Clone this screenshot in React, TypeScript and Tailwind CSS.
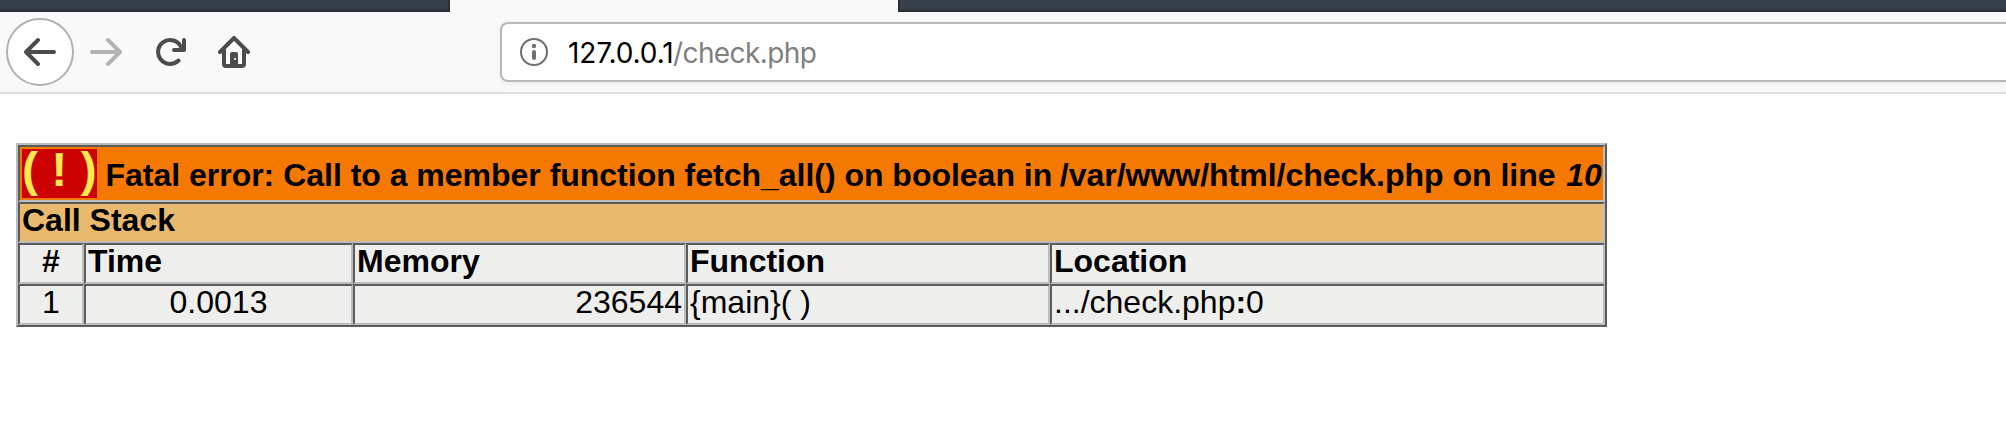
import type { ReactNode } from "react";

const cellBorder =
  "box-border border-2 border-t-[#5b5b5b] border-l-[#5b5b5b] border-b-[#bcbcbc] border-r-[#bcbcbc] px-[2px] whitespace-pre";

function Cell({ className, children }: { className: string; children: ReactNode }) {
  return <div className={`${cellBorder} ${className}`}>{children}</div>;
}

function Toolbar() {
  return (
    <header>
      <div className="flex h-3 justify-between bg-[#f9f9f9]">
        <div className="h-3 w-[450px] border-r-2 border-b-2 border-[#272e36] bg-[#343e48]" />
        <div className="h-3 w-[1108px] border-b-2 border-l-2 border-[#272e36] bg-[#373f4a]" />
      </div>
      <div className="flex h-[82px] border-b-2 border-[#dfdfdf] bg-[#f9f9f9]">
        <div className="flex h-20 w-[500px] items-center pl-1.5">
          <div className="flex size-[68px] items-center justify-center rounded-full border-2 border-[#b1b1b1] bg-white">
            <svg width="32" height="32" viewBox="0 0 32 32" fill="none" stroke="#4c4c4c" strokeWidth="4" strokeLinecap="round" strokeLinejoin="round">
              <path d="M30 16H3M14 4L2 16l12 12" />
            </svg>
          </div>
          <svg className="ml-4" width="32" height="32" viewBox="0 0 32 32" fill="none" stroke="#b3b3b3" strokeWidth="4" strokeLinecap="round" strokeLinejoin="round">
            <path d="M2 16h27M18 4l12 12-12 12" />
          </svg>
          <svg className="ml-[34px]" width="32" height="32" viewBox="0 0 32 32" fill="none" stroke="#4c4c4c" strokeWidth="4" strokeLinecap="round" strokeLinejoin="round">
            <path d="M22.5 24.5A12 12 0 1 1 25 11" />
            <path d="M18 14h10V4" />
            <path d="M22 14l6-6v6z" fill="#4c4c4c" strokeWidth="1" />
          </svg>
          <svg className="ml-[30px]" width="32" height="32" viewBox="0 0 32 32" fill="none" stroke="#4c4c4c" strokeWidth="4" strokeLinecap="round" strokeLinejoin="round">
            <path d="M2 16L16 2l14 14" />
            <path d="M6 14v14q0 2 2 2h16q2 0 2-2V14" />
            <path d="M12 28V18q0-2 2-2h4q2 0 2 2v10z" fill="#4c4c4c" stroke="none" />
            <path d="M16 22h2v2h-2z" fill="#dddddd" stroke="none" />
          </svg>
        </div>
        <div className="mt-2.5 flex h-[60px] flex-1 items-center rounded-l-lg border-2 border-r-0 border-[#b9b9b9] bg-white pl-[18px] shadow-[0_2px_6px_rgba(0,0,0,0.06)]">
          <svg width="28" height="28" viewBox="0 0 28 28" fill="none">
            <circle cx="14" cy="14" r="13" stroke="#6e6e6e" strokeWidth="2" />
            <circle cx="14" cy="8" r="2.2" fill="#6e6e6e" />
            <path d="M14 14v6" stroke="#6e6e6e" strokeWidth="4" strokeLinecap="round" />
          </svg>
          <div className="ml-5 flex pt-0.5 font-['Inter',sans-serif] text-[28px] leading-8 whitespace-pre">
            <span className="w-[105px] tracking-[-0.1px] text-black">127.0.0.1</span>
            <span className="tracking-[-0.6px] text-[#808080]">/check.php</span>
          </div>
        </div>
      </div>
    </header>
  );
}

export default function App() {
  return (
    <div className="h-[444px] w-[2006px] overflow-hidden bg-white text-black">
      <Toolbar />
      <main className="mt-[49px] ml-4 w-[1591px] border-2 border-t-[#bcbcbc] border-r-[#5b5b5b] border-b-[#5b5b5b] border-l-[#bcbcbc] font-['Liberation_Sans',Arial,sans-serif] text-[32px] leading-8">
        <Cell className="flex h-[57px] items-baseline bg-[#f57900] pt-[2px] font-bold">
          <span className="h-[49px] w-[75px] bg-[#cc0000] text-[48px] leading-[41px] text-[#fce94f]">( ! )</span>
          <span className="tracking-[-0.015px]"> Fatal error: Call to a member function fetch_all() on boolean in<span className="tracking-[-1.3px]"> </span>/var/www/html/check.php on line<span className="tracking-[1.8px]"> </span><i>10</i></span>
        </Cell>
        <Cell className="h-[41px] bg-[#e9b96e] font-bold">Call Stack</Cell>
        <div className="grid grid-cols-[66px_269px_333px_364px_555px] grid-rows-[41px_41px] bg-[#eeeeec]">
          <Cell className="text-center font-bold">#</Cell>
          <Cell className="font-bold">Time</Cell>
          <Cell className="font-bold">Memory</Cell>
          <Cell className="font-bold">Function</Cell>
          <Cell className="font-bold">Location</Cell>
          <Cell className="text-center">1</Cell>
          <Cell className="text-center">0.0013</Cell>
          <Cell className="text-right">236544</Cell>
          <Cell className="">{"{main}( )"}</Cell>
          <Cell className="">.../check.php<b>:</b>0</Cell>
        </div>
      </main>
    </div>
  );
}
